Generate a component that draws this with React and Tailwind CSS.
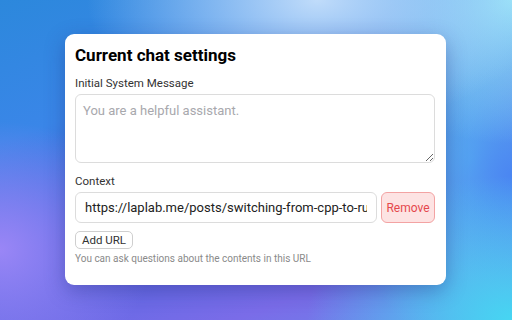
import { useState } from "react";

const bg =
  "bg-[radial-gradient(ellipse_45%_40%_at_62%_0%,rgba(192,220,250,1)_0%,rgba(170,208,248,0.6)_50%,transparent_100%),radial-gradient(ellipse_35%_45%_at_100%_0%,#98e4f8_0%,transparent_100%),radial-gradient(ellipse_40%_45%_at_100%_100%,#46d6f2_0%,transparent_100%),radial-gradient(ellipse_30%_40%_at_0%_78%,#9a86f6_0%,transparent_100%),radial-gradient(ellipse_20%_35%_at_100%_55%,#4a86f2_0%,transparent_100%),radial-gradient(ellipse_25%_60%_at_92%_50%,#5ec2f0_0%,transparent_100%),linear-gradient(160deg,#2c88dc_0%,#3a86e8_28%,#5266e2_52%,#7a6ce8_80%,#6a8cec_100%)]";

const Settings = () => {
  const [system, setSystem] = useState("");
  const [urls, setUrls] = useState([
    "https://laplab.me/posts/switching-from-cpp-to-rust",
  ]);

  const updateUrl = (i, value) => {
    setUrls((prev) => prev.map((u, j) => (j === i ? value : u)));
  };

  return (
    <div
      className={`w-[512px] h-[320px] pl-[65px] pt-[34px] overflow-hidden ${bg}`}
      style={{ fontFamily: "Roboto, 'Liberation Sans', sans-serif" }}
    >
      <div className="w-[381px] h-[251px] bg-white rounded-[9px] shadow-[0_6px_20px_rgba(30,40,120,0.35)] px-[10px] pt-[10px]">
        <h2 className="text-[17px] leading-[22px] font-bold text-black">
          Current chat settings
        </h2>

        <label className="block mt-[10px] text-[11.5px] leading-[14px] text-[#333]">
          Initial System Message
        </label>
        <textarea
          value={system}
          onChange={(e) => setSystem(e.target.value)}
          placeholder="You are a helpful assistant."
          className="block mt-[4px] w-[360px] h-[69px] rounded-[6px] border border-[#dcdcdc] px-[7px] py-[6px] text-[13px] text-[#222] placeholder:text-[#a8a8ad] outline-none"
        />

        <label className="block mt-[11px] text-[11.5px] leading-[14px] text-[#333]">
          Context
        </label>
        {urls.map((url, i) => (
          <div key={i} className="flex gap-[4px] mt-[4px]">
            <input
              type="text"
              value={url}
              onChange={(e) => updateUrl(i, e.target.value)}
              className="w-[302px] h-[31px] rounded-[6px] border border-[#dcdcdc] px-[9px] text-[13px] text-[#222] outline-none"
            />
            <button
              type="button"
              onClick={() => setUrls((prev) => prev.filter((_, j) => j !== i))}
              className="w-[54px] h-[31px] rounded-[6px] border border-[#f3a3a3] bg-[#fde3e3] text-[12px] text-[#e5484d]"
            >
              Remove
            </button>
          </div>
        ))}
        <button
          type="button"
          onClick={() => setUrls((prev) => [...prev, ""])}
          className="block mt-[8px] h-[18px] px-[6px] rounded-[5px] border border-[#cfcfcf] bg-white text-[11.5px] leading-[16px] text-[#333]"
        >
          Add URL
        </button>
        <p className="mt-[4px] text-[10px] leading-[12px] text-[#8a8a8a]">
          You can ask questions about the contents in this URL
        </p>
      </div>
    </div>
  );
};

export default function App() {
  return <Settings />;
}
